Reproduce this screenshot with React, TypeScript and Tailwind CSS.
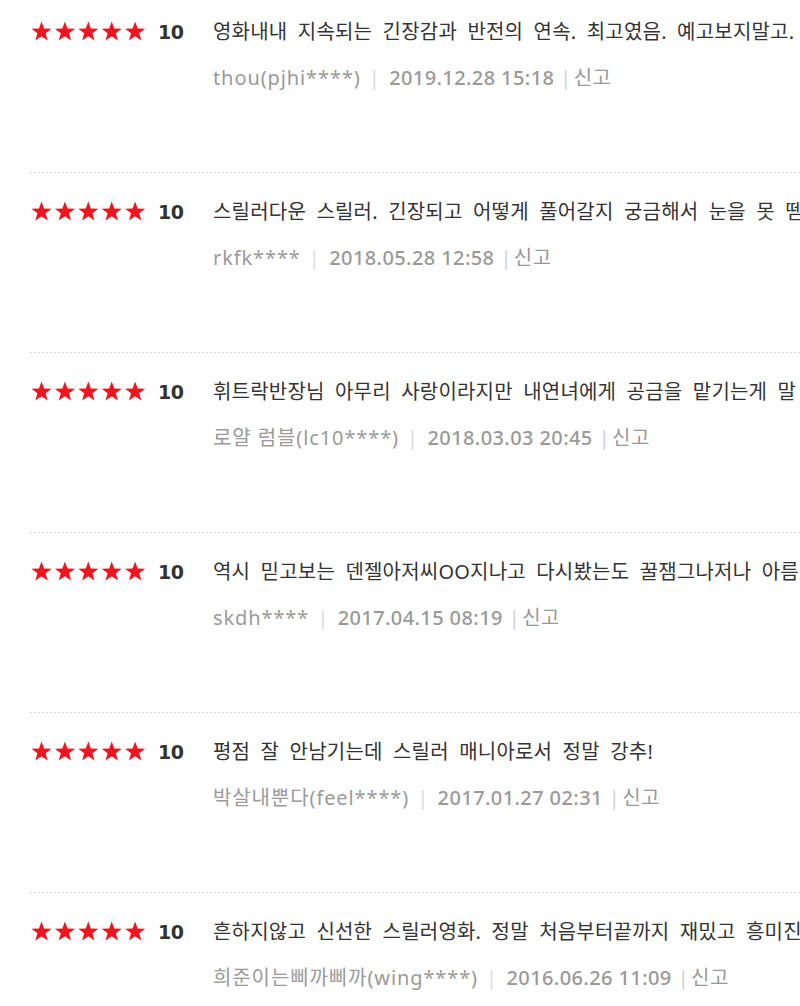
const reviews = [
  {
    text: "영화내내 지속되는 긴장감과 반전의 연속. 최고였음. 예고보지말고.",
    author: "thou(pjhi****)",
    date: "2019.12.28 15:18",
  },
  {
    text: "스릴러다운 스릴러. 긴장되고 어떻게 풀어갈지 궁금해서 눈을 못 뗌",
    author: "rkfk****",
    date: "2018.05.28 12:58",
  },
  {
    text: "휘트락반장님 아무리 사랑이라지만 내연녀에게 공금을 맡기는게 말",
    author: "로얄 럼블(lc10****)",
    date: "2018.03.03 20:45",
  },
  {
    text: "역시 믿고보는 덴젤아저씨OO지나고 다시봤는도 꿀잼그나저나 아름",
    author: "skdh****",
    date: "2017.04.15 08:19",
  },
  {
    text: "평점 잘 안남기는데 스릴러 매니아로서 정말 강추!",
    author: "박살내뿐다(feel****)",
    date: "2017.01.27 02:31",
  },
  {
    text: "흔하지않고 신선한 스릴러영화. 정말 처음부터끝까지 재밌고 흥미진",
    author: "희준이는삐까삐까(wing****)",
    date: "2016.06.26 11:09",
  },
];

const font = { fontFamily: '"Noto Sans", "Noto Sans CJK KR", sans-serif' };

const Stars = () => (
  <svg width="118" height="22" viewBox="0 0 118 22" className="shrink-0">
    {[0, 1, 2, 3, 4].map((i) => {
      const cx = 10.5 + i * 23.4;
      const cy = 11;
      const pts = Array.from({ length: 10 }, (_, k) => {
        const r = k % 2 === 0 ? 10.5 : 4.3;
        const a = (Math.PI / 5) * k - Math.PI / 2;
        return `${(cx + r * Math.cos(a)).toFixed(2)},${(cy + r * Math.sin(a)).toFixed(2)}`;
      }).join(" ");
      return <polygon key={i} points={pts} fill="#f0141e" />;
    })}
  </svg>
);

const ReviewRow = ({ review, first }: { review: (typeof reviews)[number]; first: boolean }) => {
  return (
    <div className={first ? "pt-[20px]" : "pt-[27px]"}>
      <div className="flex items-center h-6 pl-[31px]">
        <Stars />
        <span
          className="ml-[9px] w-[55px] shrink-0 text-[19px] font-bold text-[#333] tracking-[-0.5px]"
          style={{ fontFamily: '"DejaVu Sans", sans-serif' }}
        >
          10
        </span>
        <p className="whitespace-nowrap text-[20px] text-[#333] tracking-[0.2px] [word-spacing:5px]">
          {review.text}
        </p>
      </div>
      <div className="mt-[22px] flex items-center h-6 pl-[213px] whitespace-nowrap text-[20px] tracking-[0.4px]">
        <span className="text-[#9a9a9a] tracking-[0.9px]">{review.author}</span>
        <span className="ml-[8px] mr-[9px] text-[#dcdcdc]">|</span>
        <span className="text-[#999] font-medium">{review.date}</span>
        <span className="ml-[6px] mr-[2px] text-[#d0d0d0]">|</span>
        <span className="text-[#999]">신고</span>
      </div>
      <div className="h-[82px]" />
    </div>
  );
};

export default function App() {
  return (
    <div className="h-[1006px] w-[800px] overflow-hidden bg-white" style={font}>
      {reviews.map((review, i) => (
        <div key={i}>
          {i > 0 && (
            <div className="ml-[30px] h-px bg-[repeating-linear-gradient(to_right,#d8d8d8_0_2px,transparent_2px_4px)]" />
          )}
          <ReviewRow review={review} first={i === 0} />
        </div>
      ))}
    </div>
  );
}
